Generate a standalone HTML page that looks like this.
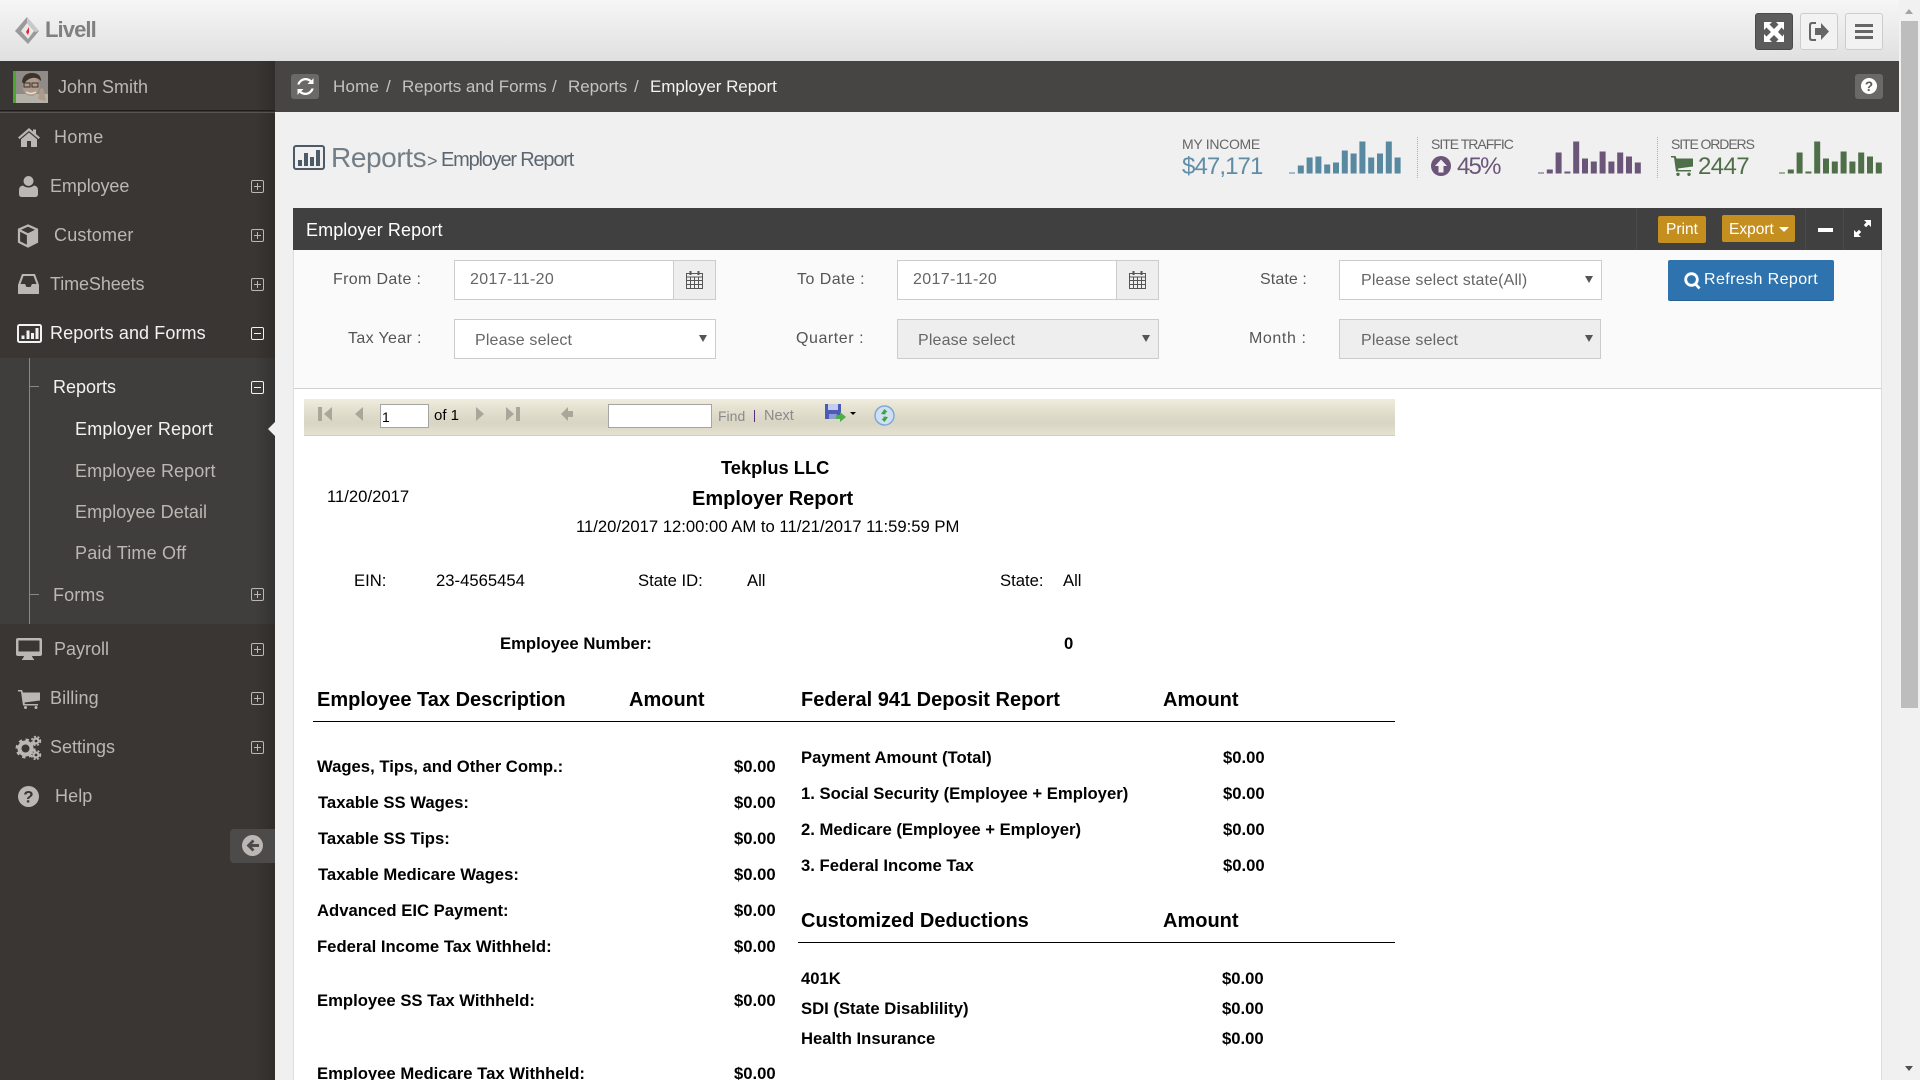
<!DOCTYPE html>
<html lang="en"><head><meta charset="utf-8"><title>Employer Report</title>
<style>
*{box-sizing:border-box}
html,body{margin:0;padding:0;width:1920px;height:1080px;overflow:hidden;background:#f0f0f0;font-family:"Liberation Sans",sans-serif}
#wrap{position:relative;width:1920px;height:1080px;overflow:hidden;background:#f0f0f0}
.a{position:absolute}
.t{position:absolute;white-space:nowrap;line-height:24px;height:24px}
.n{color:#bcb7b3;font-size:18px;letter-spacing:.1px}
.w{color:#f2f2f2}
.l{color:#555;font-size:16px;letter-spacing:.45px}
.v{color:#666;font-size:16px;letter-spacing:.35px}
.f{position:absolute;background:#fff;border:1px solid #ccc}
.g{background:#eee}
.b{color:#000;font-weight:bold;font-size:16.67px}
.h{color:#000;font-weight:bold;font-size:20px}
.r{color:#000;font-size:16.67px}
.bc{color:#c5c3c1;font-size:17px;letter-spacing:-.05px}
.p{position:absolute;left:251px;width:13px;height:13px;border:1px solid #bcb7b3;border-radius:2px}
.p:before{content:"";position:absolute;left:2px;right:2px;top:4.5px;height:1.5px;background:#bcb7b3}
.p.x:after{content:"";position:absolute;top:2px;bottom:2px;left:4.5px;width:1.5px;background:#bcb7b3}
.p.o{border-color:#f2f2f2;border-width:1.5px}.p.o:before{background:#f2f2f2}
.ar{position:absolute;width:0;height:0;border-left:4px solid transparent;border-right:4px solid transparent;border-top:7px solid #555}
svg{position:absolute;display:block;overflow:visible}
</style></head><body><div id="wrap">

<!-- top bar -->
<div class="a" style="left:0;top:0;width:1899px;height:61px;background:linear-gradient(#f6f6f6,#e0e0e0)"></div>
<svg style="left:15px;top:17px" width="24" height="28" viewBox="0 0 24 28"><path d="M12 0L24 14 13 27 0 14z" fill="#9a9a9a"/><path d="M12 6l7 8-6 8-7-8z" fill="#e9e9e9"/><path d="M12 0l12 14-4 1-8-9z" fill="#c9c9c9"/><path d="M14 10l-3 5 2 3 1-3z" fill="#e8222a"/></svg>
<div class="t" style="left:45px;top:18px;font-size:22px;font-weight:bold;color:#808080;letter-spacing:-.9px">Livell</div>

<div class="a" style="left:1755px;top:13px;width:38px;height:37px;background:#5c5c5c;border:1px solid #4a4a4a;border-radius:3px"></div>
<svg style="left:1764px;top:22px" width="20" height="20" viewBox="0 0 20 20" fill="#fff"><path d="M0 0h8L5.500 2.500 10 7l4.500-4.500L12 0h8v8l-2.500-2.500L14 10l4.500 4.500L20 12v8h-8l2.500-2.500L10 13l-4.500 4.500L8 20H0v-8l2.500 2.500L7 10 2.500 5.500 0 8z"/></svg>
<div class="a" style="left:1800px;top:13px;width:38px;height:37px;background:#f2f2f2;border:1px solid #ccc;border-radius:3px"></div>
<svg style="left:1809px;top:22px" width="20" height="19" viewBox="0 0 20 19" fill="#666"><path d="M0 3q0-3 3-3h4v2H3.500Q2 2 2 3.500v12Q2 17 3.500 17H7v2H3q-3 0-3-3z"/><path d="M6 6h6V1l8 8.500L12 18v-5H6z"/></svg>
<div class="a" style="left:1845px;top:13px;width:38px;height:37px;background:#f2f2f2;border:1px solid #ccc;border-radius:3px"></div>
<div class="a" style="left:1855px;top:24px;width:18px;height:3px;background:#666"></div>
<div class="a" style="left:1855px;top:30px;width:18px;height:3px;background:#666"></div>
<div class="a" style="left:1855px;top:36px;width:18px;height:3px;background:#666"></div>

<!-- sidebar -->
<div class="a" style="left:0;top:61px;width:275px;height:1019px;background:#3a3633"></div>
<div class="a" style="left:0;top:358px;width:275px;height:266px;background:#3f3e3c"></div>
<div class="a" style="left:255px;top:61px;width:20px;height:1019px;background:linear-gradient(90deg,rgba(0,0,0,0),rgba(0,0,0,.18))"></div>
<div class="a" style="left:0;top:110px;width:275px;height:1px;background:#1f1d1b"></div>
<div class="a" style="left:0;top:112px;width:275px;height:1px;background:#565452"></div>

<div class="a" style="left:13px;top:71px;width:3px;height:32px;background:#4ca82c"></div>
<svg style="left:16px;top:71px" width="32" height="32" viewBox="0 0 32 32"><rect width="32" height="32" fill="#8f8b86"/><rect x="0" y="23" width="32" height="9" fill="#b5b2aa"/><ellipse cx="15" cy="15" rx="8.500" ry="10" fill="#b09a8a"/><path d="M6 11q1-9 10-9t9 8q-4-4-9-3t-8 6z" fill="#3d332c"/><rect x="8" y="12" width="6" height="4" fill="none" stroke="#333"/><rect x="16" y="12" width="6" height="4" fill="none" stroke="#333"/><path d="M10 21q5 3 10 0" stroke="#e5e0da" stroke-width="1.500" fill="none"/><path d="M22 28l2-10 3-1 1 4 2 9z" fill="#b09a8a"/></svg>
<div class="t" style="left:58px;top:75px;font-size:18px;color:#bcb7b3;letter-spacing:0">John Smith</div>

<!-- nav icons -->
<svg style="left:18px;top:128px" width="22" height="19" viewBox="0 0 22 19" fill="#bcb7b3"><path d="M11 0L0 9.500 1.500 11 11 3l9.500 8L22 9.500 18 6V1.500h-3V3.500z"/><path d="M11 4.500L3 11.200V19h6v-6h4v6h6v-7.800z"/></svg>
<svg style="left:19px;top:176px" width="19" height="21" viewBox="0 0 19 21" fill="#bcb7b3"><circle cx="9.500" cy="5" r="5"/><path d="M0 18v-4q0-4 4-4.500 2.500 2 5.500 2t5.500-2q4 .5 4 4.500v4q0 3-3 3H3q-3 0-3-3z"/></svg>
<svg style="left:17px;top:224px" width="22" height="24" viewBox="0 0 22 24"><path d="M11 1.500L2 5.500v12.500l9 4.500 9-4.500V5.500zM2 6l9 4.500L20 6M11 10.500V22" fill="none" stroke="#bcb7b3" stroke-width="2.200"/><path d="M11 11l8-4v10.500l-8 4z" fill="#bcb7b3"/></svg>
<svg style="left:18px;top:274px" width="21" height="20" viewBox="0 0 21 20" fill="#bcb7b3"><path d="M4 0h13l4 11v9H0v-9zM5.500 2L2.500 10H7l1.500 3h4L14 10h4.500l-3-8z" fill-rule="evenodd"/></svg>
<svg style="left:17px;top:324px" width="25" height="19" viewBox="0 0 25 19"><rect x="1" y="1" width="23" height="17" rx="1.500" fill="none" stroke="#f2f2f2" stroke-width="2"/><path d="M4.500 11.500h3V15h-3zM9.500 6.500h3V15h-3zM14 9h3v6h-3zM18.500 4h3v11h-3z" fill="#f2f2f2"/></svg>
<svg style="left:16px;top:638px" width="26" height="22" viewBox="0 0 26 22" fill="#bcb7b3"><path d="M2 0h22q2 0 2 2v14q0 2-2 2h-8l1 2.500 1 .5v1H6v-1l1-.5L8 18H2q-2 0-2-2V2q0-2 2-2zM2.500 2.500v11h21v-11z" fill-rule="evenodd"/></svg>
<svg style="left:18px;top:690px" width="22" height="19" viewBox="0 0 22 19" fill="#bcb7b3"><path d="M0 0h4l1 2.500h17v8L6.500 12.500l.3 1.500H20v1.500H5L3 1.500H0z"/><circle cx="7.500" cy="17.500" r="1.500"/><circle cx="18" cy="17.500" r="1.500"/></svg>
<svg style="left:16px;top:736px" width="26" height="24" viewBox="0 0 26 24" fill="none" stroke="#bcb7b3"><circle cx="9.500" cy="12.500" r="6" stroke-width="4"/><circle cx="9.500" cy="12.500" r="8.700" stroke-width="2.500" stroke-dasharray="3.300 3.500"/><circle cx="20" cy="5" r="2.500" stroke-width="2.200"/><circle cx="20" cy="5" r="4.400" stroke-width="1.600" stroke-dasharray="2 1.700"/><circle cx="20" cy="19" r="2.500" stroke-width="2.200"/><circle cx="20" cy="19" r="4.400" stroke-width="1.600" stroke-dasharray="2 1.700"/></svg>
<svg style="left:18px;top:786px" width="21" height="21" viewBox="0 0 21 21"><circle cx="10.500" cy="10.500" r="10.500" fill="#bcb7b3"/><text x="10.500" y="16.500" font-size="17" font-weight="bold" text-anchor="middle" fill="#3a3633" font-family="Liberation Sans">?</text></svg>

<div class="t n" style="left:54px;top:125px;letter-spacing:.4px">Home</div>
<div class="t n" style="left:50px;top:174px;letter-spacing:-.1px">Employee</div>
<div class="t n" style="left:54px;top:223px;letter-spacing:.2px">Customer</div>
<div class="t n" style="left:50px;top:272px;letter-spacing:-.1px">TimeSheets</div>
<div class="t n w" style="left:50px;top:321px;letter-spacing:.1px">Reports and Forms</div>
<div class="t n w" style="left:53px;top:375px;letter-spacing:0">Reports</div>
<div class="t n w" style="left:75px;top:417px;letter-spacing:.2px">Employer Report</div>
<div class="t n" style="left:75px;top:459px;letter-spacing:.1px">Employee Report</div>
<div class="t n" style="left:75px;top:500px;letter-spacing:.07px">Employee Detail</div>
<div class="t n" style="left:75px;top:541px;letter-spacing:.2px">Paid Time Off</div>
<div class="t n" style="left:53px;top:583px">Forms</div>
<div class="t n" style="left:54px;top:637px;letter-spacing:0">Payroll</div>
<div class="t n" style="left:50px;top:686px">Billing</div>
<div class="t n" style="left:50px;top:735px;letter-spacing:0">Settings</div>
<div class="t n" style="left:55px;top:784px">Help</div>

<div class="p x" style="top:180px"></div>
<div class="p x" style="top:229px"></div>
<div class="p x" style="top:278px"></div>
<div class="p o" style="top:327px"></div>
<div class="p o" style="top:381px"></div>
<div class="p x" style="top:588px"></div>
<div class="p x" style="top:643px"></div>
<div class="p x" style="top:692px"></div>
<div class="p x" style="top:741px"></div>

<div class="a" style="left:29px;top:358px;width:1px;height:266px;background:#8a8885"></div>
<div class="a" style="left:29px;top:386px;width:10px;height:1px;background:#8a8885"></div>
<div class="a" style="left:29px;top:594px;width:10px;height:1px;background:#8a8885"></div>
<div class="a" style="left:268px;top:422px;width:0;height:0;border-top:7px solid transparent;border-bottom:7px solid transparent;border-right:7px solid #f0f0f0"></div>
<div class="a" style="left:230px;top:829px;width:45px;height:34px;background:#4c4b49;border-radius:4px 0 0 4px"></div>
<svg style="left:242px;top:835px" width="21" height="21" viewBox="0 0 21 21"><circle cx="10.500" cy="10.500" r="10.500" fill="#bcb7b3"/><path d="M10.500 4.500l-6 6 6 6 2-2-2.500-2.500h7v-3h-7l2.500-2.500z" fill="#4c4b49"/></svg>

<!-- breadcrumb -->
<div class="a" style="left:275px;top:61px;width:1624px;height:51px;background:#474543"></div>
<div class="a" style="left:291px;top:74px;width:28px;height:25px;background:#6a6968;border-radius:3px"></div>
<svg style="left:297px;top:78px" width="17" height="17" viewBox="0 0 17 17" fill="#fff"><path d="M16.500 0v6h-6l2.200-2.200C11.800 3 10.200 2.300 8.500 2.300c-2.700 0-5 1.800-5.900 4.200H.3C1.200 2.800 4.500 0 8.500 0c2.400 0 4.600 1 6.100 2.400zM.5 17v-6h6l-2.200 2.200c.9.800 2.500 1.500 4.200 1.500 2.700 0 5-1.800 5.900-4.200h2.300c-.9 3.700-4.200 6.500-8.200 6.500-2.400 0-4.600-1-6.100-2.400z"/></svg>
<div class="t bc" style="left:333px;top:75px;letter-spacing:.2px">Home</div><div class="t bc" style="left:386px;top:75px">/</div>
<div class="t bc" style="left:402px;top:75px">Reports and Forms</div><div class="t bc" style="left:552px;top:75px">/</div>
<div class="t bc" style="left:568px;top:75px">Reports</div><div class="t bc" style="left:634px;top:75px">/</div>
<div class="t bc" style="left:650px;top:75px;color:#f2f2f2">Employer Report</div>
<div class="a" style="left:1855px;top:74px;width:28px;height:25px;background:#6a6968;border-radius:3px"></div>
<svg style="left:1861px;top:78px" width="16" height="16" viewBox="0 0 16 16"><circle cx="8" cy="8" r="8" fill="#fff"/><text x="8" y="13" font-size="13.500" font-weight="bold" text-anchor="middle" fill="#5a5958" font-family="Liberation Sans">?</text></svg>

<!-- page title -->
<svg style="left:293px;top:145px" width="32" height="25" viewBox="0 0 32 25"><rect x="1" y="1" width="30" height="23" rx="2" fill="none" stroke="#4d5a68" stroke-width="2"/><path d="M5 15h4v6H5zM11 8h4v13h-4zM17 12h4v9h-4zM23 5h4v16h-4z" fill="#4d5a68"/></svg>
<div class="t" style="left:331px;top:146px;font-size:28px;color:#737d86;letter-spacing:-.4px">Reports</div>
<div class="t" style="left:427px;top:149px;font-size:18px;color:#67727c">&gt;</div>
<div class="t" style="left:441px;top:148px;font-size:20px;color:#5c6670;letter-spacing:-1.2px">Employer Report</div>

<!-- stats -->
<div class="t" style="left:1182px;top:132px;font-size:14px;color:#666;letter-spacing:-.3px">MY INCOME</div>
<div class="t" style="left:1182px;top:155px;font-size:24px;color:#5f8da6;letter-spacing:-.9px">$47,171</div>
<div class="a" style="left:1417px;top:137px;height:41px;border-left:1px dotted #aaa"></div>
<div class="t" style="left:1431px;top:132px;font-size:14px;color:#666;letter-spacing:-1px">SITE TRAFFIC</div>
<svg style="left:1431px;top:156px" width="20" height="20" viewBox="0 0 20 20"><circle cx="10" cy="10" r="10" fill="#6b5579"/><path d="M10 3.500l6 6.500h-3.500v6.500h-5V10H4z" fill="#f0f0f0"/></svg>
<div class="t" style="left:1457px;top:155px;font-size:24px;color:#6b5579;letter-spacing:-1.8px">45%</div>
<div class="a" style="left:1657px;top:137px;height:41px;border-left:1px dotted #aaa"></div>
<div class="t" style="left:1671px;top:132px;font-size:14px;color:#666;letter-spacing:-1.1px">SITE ORDERS</div>
<svg style="left:1671px;top:156px" width="22" height="20" viewBox="0 0 22 20" fill="#4f6f49"><path d="M0 0h4.500l1 2.500H22v8L7 12.500l.3 1.500H20v1.500H5L3 1.500H0z"/><circle cx="7" cy="18.300" r="1.700"/><circle cx="18" cy="18.300" r="1.700"/></svg>
<div class="t" style="left:1698px;top:155px;font-size:24px;color:#4f6f49;letter-spacing:-.6px">2447</div>

<svg style="left:1289px;top:140px" width="114" height="34" viewBox="0 0 114 34" fill="#5889a0"><rect x="0" y="32.500" width="6" height="1"/><rect x="8.800" y="25.500" width="6" height="8"/><rect x="17.600" y="17.500" width="6" height="16"/><rect x="26.400" y="16.500" width="6" height="17"/><rect x="35.200" y="24.500" width="6" height="9"/><rect x="44" y="22.500" width="6" height="11"/><rect x="52.800" y="10.500" width="6" height="23"/><rect x="61.600" y="13.500" width="6" height="20"/><rect x="70.400" y="1.500" width="6" height="32"/><rect x="79.200" y="17.500" width="6" height="16"/><rect x="88" y="13.500" width="6" height="20"/><rect x="96.800" y="1.500" width="6" height="32"/><rect x="105.600" y="17.500" width="6" height="16"/></svg>
<svg style="left:1538px;top:140px" width="104" height="34" viewBox="0 0 104 34" fill="#6b5579"><rect x="0" y="32.500" width="6" height="1"/><rect x="8.800" y="29.500" width="6" height="4"/><rect x="17.600" y="12.500" width="6" height="21"/><rect x="26.400" y="31.500" width="6" height="2"/><rect x="35.200" y="1.500" width="6" height="32"/><rect x="44" y="18.500" width="6" height="15"/><rect x="52.800" y="21.500" width="6" height="12"/><rect x="61.600" y="11.500" width="6" height="22"/><rect x="70.400" y="21.500" width="6" height="12"/><rect x="79.200" y="12.500" width="6" height="21"/><rect x="88" y="16.500" width="6" height="17"/><rect x="96.800" y="22.500" width="6" height="11"/></svg>
<svg style="left:1779px;top:140px" width="104" height="34" viewBox="0 0 104 34" fill="#4f6f49"><rect x="0" y="32.500" width="6" height="1"/><rect x="8.800" y="29.500" width="6" height="4"/><rect x="17.600" y="12.500" width="6" height="21"/><rect x="26.400" y="31.500" width="6" height="2"/><rect x="35.200" y="1.500" width="6" height="32"/><rect x="44" y="18.500" width="6" height="15"/><rect x="52.800" y="21.500" width="6" height="12"/><rect x="61.600" y="11.500" width="6" height="22"/><rect x="70.400" y="21.500" width="6" height="12"/><rect x="79.200" y="12.500" width="6" height="21"/><rect x="88" y="16.500" width="6" height="17"/><rect x="96.800" y="22.500" width="6" height="11"/></svg>

<!-- panel -->
<div class="a" style="left:293px;top:250px;width:1589px;height:830px;background:#fff;border-left:1px solid #ddd;border-right:1px solid #ddd"></div>
<div class="a" style="left:294px;top:250px;width:1587px;height:139px;background:#fafafa;border-bottom:1px solid #d0d0d0"></div>
<div class="a" style="left:293px;top:208px;width:1589px;height:42px;background:#404040"></div>
<div class="t" style="left:306px;top:218px;font-size:18px;color:#fff;letter-spacing:.1px">Employer Report</div>
<div class="a" style="left:1636px;top:208px;width:1px;height:42px;background:#4a4a4a"></div>
<div class="a" style="left:1805px;top:208px;width:1px;height:42px;background:#4a4a4a"></div>
<div class="a" style="left:1843px;top:208px;width:1px;height:42px;background:#4a4a4a"></div>
<div class="a" style="left:1658px;top:216px;width:48px;height:27px;background:#c48f1f;border-radius:2px"></div>
<div class="t" style="left:1666px;top:218px;font-size:15.500px;color:#fff">Print</div>
<div class="a" style="left:1722px;top:215px;width:73px;height:27px;background:#c48f1f;border-radius:2px"></div>
<div class="t" style="left:1729px;top:218px;font-size:15.500px;color:#fff">Export</div>
<div class="a" style="left:1779px;top:227px;width:0;height:0;border-left:5px solid transparent;border-right:5px solid transparent;border-top:5px solid #fff"></div>
<div class="a" style="left:1818px;top:228px;width:15px;height:4px;background:#fff"></div>
<svg style="left:1854px;top:220px" width="17" height="17" viewBox="0 0 17 17" fill="#fff"><path d="M10 0h7v7l-2.400-2.400L12 7.200 9.800 5l2.600-2.600zM0 17v-7l2.400 2.400L5 9.800 7.200 12l-2.600 2.600L7 17z"/></svg>

<!-- form -->
<div class="t l" style="left:333px;top:268px;letter-spacing:.35px">From Date :</div>
<div class="f" style="left:454px;top:260px;width:262px;height:40px"></div>
<div class="a" style="left:673px;top:260px;width:43px;height:40px;background:#eee;border:1px solid #ccc"></div>
<div class="t v" style="left:470px;top:268px">2017-11-20</div>
<svg style="left:686px;top:271px" width="17" height="18" viewBox="0 0 17 18" fill="none" stroke="#555"><rect x=".5" y="2.500" width="16" height="15"/><path d="M.5 6h16M.5 9.500h16M.5 13.500h16M4.500 6v11M8.500 6v11M12.500 6v11"/><path d="M4.500 0v4M12.500 0v4" stroke-width="2"/></svg>

<div class="t l" style="left:797px;top:268px">To Date :</div>
<div class="f" style="left:897px;top:260px;width:262px;height:40px"></div>
<div class="a" style="left:1116px;top:260px;width:43px;height:40px;background:#eee;border:1px solid #ccc"></div>
<div class="t v" style="left:913px;top:268px">2017-11-20</div>
<svg style="left:1129px;top:271px" width="17" height="18" viewBox="0 0 17 18" fill="none" stroke="#555"><rect x=".5" y="2.500" width="16" height="15"/><path d="M.5 6h16M.5 9.500h16M.5 13.500h16M4.500 6v11M8.500 6v11M12.500 6v11"/><path d="M4.500 0v4M12.500 0v4" stroke-width="2"/></svg>

<div class="t l" style="left:1260px;top:268px;letter-spacing:.1px">State :</div>
<div class="f" style="left:1339px;top:260px;width:263px;height:40px"></div>
<div class="t v" style="left:1361px;top:269px;letter-spacing:.15px">Please select state(All)</div>
<div class="ar" style="left:1585px;top:276px"></div>

<div class="t l" style="left:348px;top:327px;letter-spacing:.35px">Tax Year :</div>
<div class="f" style="left:454px;top:319px;width:262px;height:40px"></div>
<div class="t v" style="left:475px;top:329px;letter-spacing:.15px">Please select</div>
<div class="ar" style="left:699px;top:335px"></div>

<div class="t l" style="left:796px;top:327px;letter-spacing:.55px">Quarter :</div>
<div class="f g" style="left:897px;top:319px;width:262px;height:40px"></div>
<div class="t v" style="left:918px;top:329px;letter-spacing:.15px">Please select</div>
<div class="ar" style="left:1142px;top:335px"></div>

<div class="t l" style="left:1249px;top:327px;letter-spacing:.6px">Month :</div>
<div class="f g" style="left:1339px;top:319px;width:262px;height:40px"></div>
<div class="t v" style="left:1361px;top:329px;letter-spacing:.15px">Please select</div>
<div class="ar" style="left:1585px;top:335px"></div>

<div class="a" style="left:1668px;top:260px;width:166px;height:41px;background:#2e73ae;border-radius:2px;border-bottom:1px solid #275f90"></div>
<svg style="left:1684px;top:272px" width="17" height="18" viewBox="0 0 17 18" fill="none" stroke="#fff" stroke-width="2.800"><circle cx="7.500" cy="7.500" r="5.800"/><path d="M11.500 12l4 4.500"/></svg>
<div class="t" style="left:1704px;top:268px;font-size:16px;color:#fff;letter-spacing:.4px">Refresh Report</div>

<!-- report toolbar -->
<div class="a" style="left:304px;top:399px;width:1091px;height:37px;background:linear-gradient(#f0eddf 0%,#e6e2d2 25%,#d9d5c4 65%,#e6e2d2 100%);border-bottom:1px solid #cfcdc4"></div>
<svg style="left:318px;top:407px" width="260" height="16" viewBox="0 0 260 16"><g fill="#a9a79c"><path d="M0 0h4v14H0zM14 0v14L6 7zM45 0v14L37 7zM158 0v14l8-7zM188 0v14l8-7zM198 0h4v14h-4z"/><path d="M250 0v4h5v6h-5v4l-7-7z"/></g></svg>
<div class="a" style="left:380px;top:404px;width:49px;height:24px;background:#fff;border:1px solid #a5a5a5"></div>
<div class="t" style="left:382px;top:405px;font-size:14px;color:#000">1</div>
<div class="t" style="left:434px;top:404px;font-size:15px;color:#000">of 1</div>
<div class="a" style="left:608px;top:404px;width:104px;height:24px;background:#fff;border:1px solid #a5a5a5"></div>
<div class="t" style="left:718px;top:404px;font-size:14px;color:#8a8a8a">Find</div>
<div class="a" style="left:754px;top:410px;width:1px;height:12px;background:#5c2a7a"></div>
<div class="t" style="left:764px;top:404px;font-size:14.500px;color:#8a8a8a">Next</div>
<svg style="left:825px;top:404px" width="32" height="20" viewBox="0 0 32 20"><rect width="16" height="15" fill="#4a5cb8"/><rect x="3" y="0" width="10" height="6" fill="#c6cdec"/><rect x="4" y="10" width="8" height="5" fill="#8f9ad6"/><path d="M11 11h4V8l6 5-6 5v-3h-4z" fill="#4cae4c"/><path d="M25 8h6l-3 3z" fill="#000"/></svg>
<svg style="left:874px;top:405px" width="21" height="21" viewBox="0 0 21 21"><circle cx="10.500" cy="10.500" r="9.500" fill="#cfe0f3" stroke="#7fa8d6" stroke-width="1.500"/><path d="M7 9l3.500-5 3 3-2 .5v2zM14 12l-3.500 5-3-3 2-.5v-2z" fill="#3aa43a"/></svg>

<!-- report content -->
<div class="t b" style="left:721px;top:456px;font-size:18.300px">Tekplus LLC</div>
<div class="t r" style="left:327px;top:485px">11/20/2017</div>
<div class="t h" style="left:692px;top:487px">Employer Report</div>
<div class="t r" style="left:576px;top:515px">11/20/2017 12:00:00 AM to 11/21/2017 11:59:59 PM</div>
<div class="t r" style="left:354px;top:569px">EIN:</div>
<div class="t r" style="left:436px;top:569px">23-4565454</div>
<div class="t r" style="left:638px;top:569px">State ID:</div>
<div class="t r" style="left:747px;top:569px">All</div>
<div class="t r" style="left:1000px;top:569px">State:</div>
<div class="t r" style="left:1063px;top:569px">All</div>
<div class="t b" style="left:500px;top:632px">Employee Number:</div>
<div class="t b" style="left:1064px;top:632px">0</div>

<div class="t h" style="left:317px;top:688px">Employee Tax Description</div>
<div class="t h" style="left:629px;top:688px">Amount</div>
<div class="t h" style="left:801px;top:688px">Federal 941 Deposit Report</div>
<div class="t h" style="left:1163px;top:688px">Amount</div>
<div class="a" style="left:313px;top:721px;width:1082px;height:1px;background:#000"></div>

<div class="t b" style="left:317px;top:755px">Wages, Tips, and Other Comp.:</div>
<div class="t b" style="left:318px;top:791px">Taxable SS Wages:</div>
<div class="t b" style="left:318px;top:827px">Taxable SS Tips:</div>
<div class="t b" style="left:318px;top:863px">Taxable Medicare Wages:</div>
<div class="t b" style="left:317px;top:899px">Advanced EIC Payment:</div>
<div class="t b" style="left:317px;top:935px">Federal Income Tax Withheld:</div>
<div class="t b" style="left:317px;top:989px">Employee SS Tax Withheld:</div>
<div class="t b" style="left:317px;top:1062px">Employee Medicare Tax Withheld:</div>
<div class="t b" style="left:734px;top:755px">$0.00</div>
<div class="t b" style="left:734px;top:791px">$0.00</div>
<div class="t b" style="left:734px;top:827px">$0.00</div>
<div class="t b" style="left:734px;top:863px">$0.00</div>
<div class="t b" style="left:734px;top:899px">$0.00</div>
<div class="t b" style="left:734px;top:935px">$0.00</div>
<div class="t b" style="left:734px;top:989px">$0.00</div>
<div class="t b" style="left:734px;top:1062px">$0.00</div>

<div class="t b" style="left:801px;top:746px">Payment Amount (Total)</div>
<div class="t b" style="left:801px;top:782px">1. Social Security (Employee + Employer)</div>
<div class="t b" style="left:801px;top:818px">2. Medicare (Employee + Employer)</div>
<div class="t b" style="left:801px;top:854px">3. Federal Income Tax</div>
<div class="t b" style="left:1223px;top:746px">$0.00</div>
<div class="t b" style="left:1223px;top:782px">$0.00</div>
<div class="t b" style="left:1223px;top:818px">$0.00</div>
<div class="t b" style="left:1223px;top:854px">$0.00</div>
<div class="t h" style="left:801px;top:909px">Customized Deductions</div>
<div class="t h" style="left:1163px;top:909px">Amount</div>
<div class="a" style="left:798px;top:942px;width:597px;height:1px;background:#000"></div>
<div class="t b" style="left:801px;top:967px">401K</div>
<div class="t b" style="left:801px;top:997px">SDI (State Disablility)</div>
<div class="t b" style="left:801px;top:1027px">Health Insurance</div>
<div class="t b" style="left:1222px;top:967px">$0.00</div>
<div class="t b" style="left:1222px;top:997px">$0.00</div>
<div class="t b" style="left:1222px;top:1027px">$0.00</div>

<!-- scrollbar -->
<div class="a" style="left:1899px;top:0;width:21px;height:1080px;background:#f1f1f1"></div>
<div class="a" style="left:1901px;top:21px;width:17px;height:687px;background:#bdbdbd"></div>
<div class="a" style="left:1905px;top:9px;width:0;height:0;border-left:4.500px solid transparent;border-right:4.500px solid transparent;border-bottom:5px solid #a3a3a3"></div>
<div class="a" style="left:1905px;top:1066px;width:0;height:0;border-left:4.500px solid transparent;border-right:4.500px solid transparent;border-top:5px solid #505050"></div>
</div></body></html>
